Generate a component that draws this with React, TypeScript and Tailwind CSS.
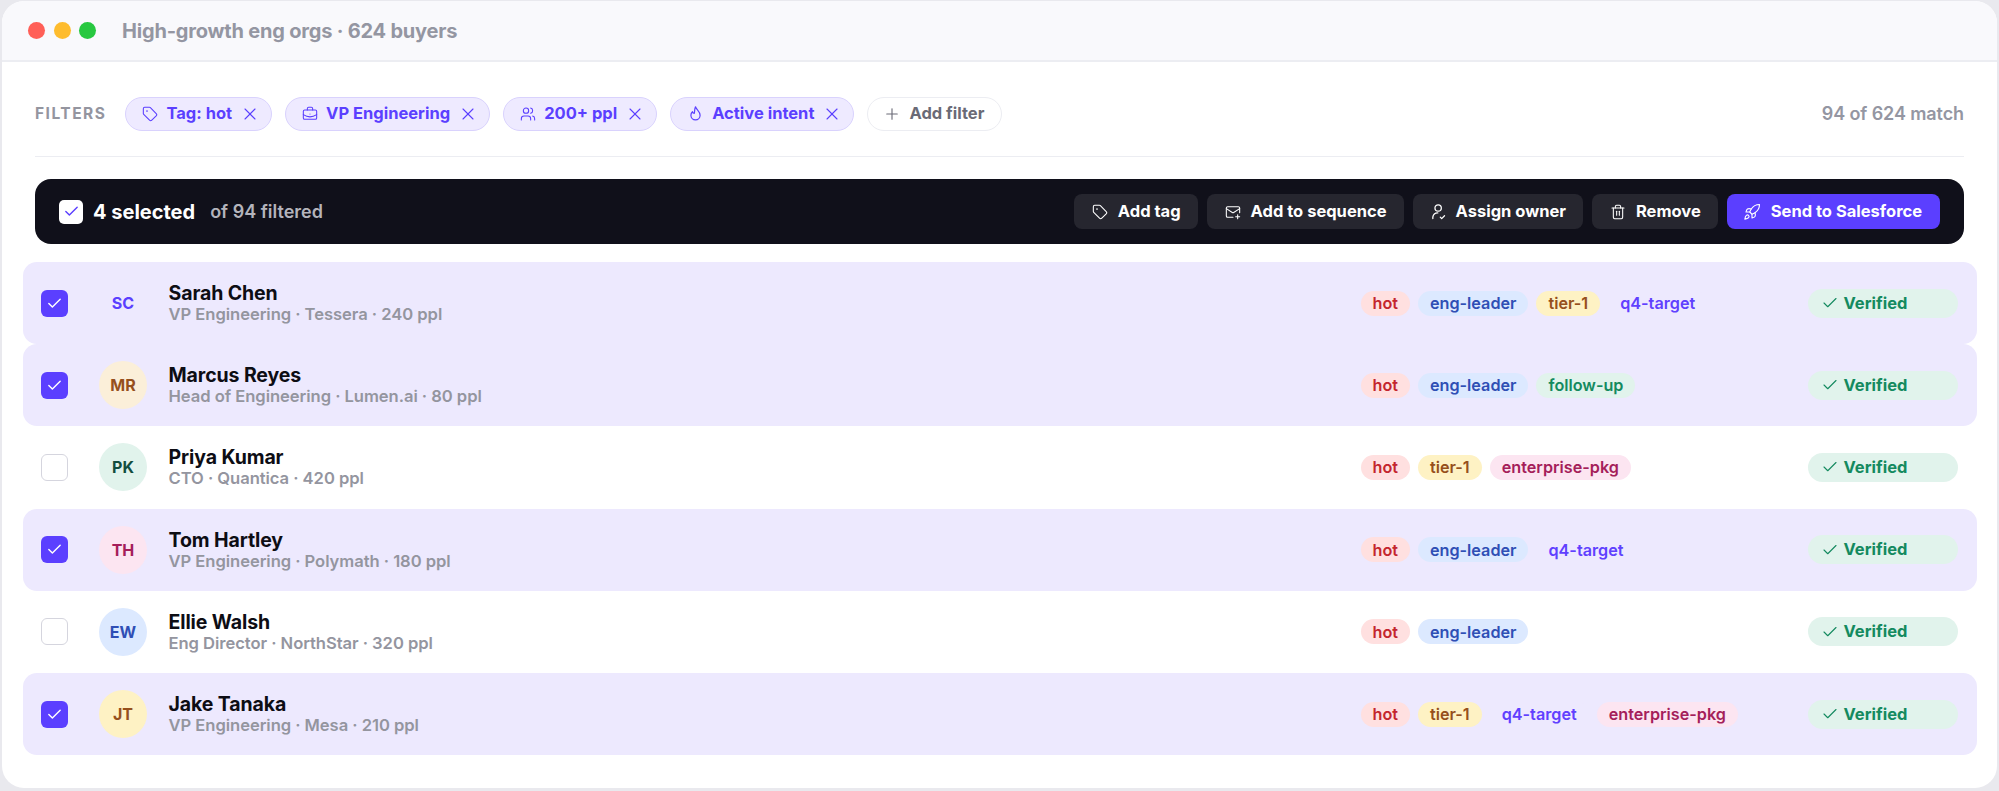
import {
  BriefcaseBusiness,
  Check,
  MailPlus,
  Plus,
  Rocket,
  Tag,
  Trash2,
  Users,
  X,
} from "lucide-react";
import type { ReactNode } from "react";

type TagName = "hot" | "eng-leader" | "tier-1" | "q4-target" | "follow-up" | "enterprise-pkg";

const tagStyles: Record<TagName, string> = {
  hot: "bg-[#ffe0e0] text-[#c4262e]",
  "eng-leader": "bg-[#dce9ff] text-[#2f4fb5]",
  "tier-1": "bg-[#fef2c4] text-[#96501c]",
  "q4-target": "bg-[#ede9fe] text-[#6040ff]",
  "follow-up": "bg-[#e1f3ec] text-[#148a5f]",
  "enterprise-pkg": "bg-[#fce5f1] text-[#a51e5a]",
};

const buyers: {
  initials: string;
  avatar: string;
  name: string;
  role: string;
  selected: boolean;
  tags: TagName[];
}[] = [
  {
    initials: "SC",
    avatar: "bg-[#ede9fe] text-[#5b3fff]",
    name: "Sarah Chen",
    role: "VP Engineering · Tessera · 240 ppl",
    selected: true,
    tags: ["hot", "eng-leader", "tier-1", "q4-target"],
  },
  {
    initials: "MR",
    avatar: "bg-[#fbefd9] text-[#96501c]",
    name: "Marcus Reyes",
    role: "Head of Engineering · Lumen.ai · 80 ppl",
    selected: true,
    tags: ["hot", "eng-leader", "follow-up"],
  },
  {
    initials: "PK",
    avatar: "bg-[#e1f3ec] text-[#134e3f]",
    name: "Priya Kumar",
    role: "CTO · Quantica · 420 ppl",
    selected: false,
    tags: ["hot", "tier-1", "enterprise-pkg"],
  },
  {
    initials: "TH",
    avatar: "bg-[#fce5f1] text-[#a51e5a]",
    name: "Tom Hartley",
    role: "VP Engineering · Polymath · 180 ppl",
    selected: true,
    tags: ["hot", "eng-leader", "q4-target"],
  },
  {
    initials: "EW",
    avatar: "bg-[#dce9ff] text-[#2f4fb5]",
    name: "Ellie Walsh",
    role: "Eng Director · NorthStar · 320 ppl",
    selected: false,
    tags: ["hot", "eng-leader"],
  },
  {
    initials: "JT",
    avatar: "bg-[#fef2c4] text-[#96501c]",
    name: "Jake Tanaka",
    role: "VP Engineering · Mesa · 210 ppl",
    selected: true,
    tags: ["hot", "tier-1", "q4-target", "enterprise-pkg"],
  },
];

function FilterPill({ icon, label }: { icon: ReactNode; label: string }) {
  return (
    <div className="flex h-[34px] items-center gap-[8px] rounded-full border-[1.5px] border-[#d9d2fd] bg-[#eeeaff] pl-[16px] pr-[11px] text-[16.5px] font-bold text-[#5b3fff]">
      {icon}
      <span>{label}</span>
      <X size={20} strokeWidth={1.3} />
    </div>
  );
}

function BarButton({ icon, label }: { icon: ReactNode; label: string }) {
  return (
    <div className="flex h-[35px] items-center gap-[10px] rounded-[8px] bg-[#26262f] pl-[18px] pr-[17px] text-[16.5px] font-bold text-white">
      {icon}
      <span>{label}</span>
    </div>
  );
}

function FlameIcon() {
  return (
    <svg width="17" height="17" viewBox="0 0 24 24" fill="none" stroke="currentColor" strokeWidth="1.7" strokeLinecap="round" strokeLinejoin="round">
      <path d="M12 2.5c1 3.8 6.5 6.5 6.5 12a6.5 6.5 0 0 1-13 0c0-2.2 1-3.9 2.2-5 .5 1.6 1.5 2.3 2.6 2.3C11 9 10.5 5.5 12 2.5z" />
    </svg>
  );
}

function AssignIcon() {
  return (
    <svg width="15" height="17" viewBox="0 0 21 24" fill="none" stroke="currentColor" strokeWidth="1.8" strokeLinecap="round" strokeLinejoin="round">
      <circle cx="10" cy="7" r="4.5" />
      <path d="M2.5 22v-2a7 7 0 0 1 7-6" />
      <path d="M13 20l2 2 4-4" />
    </svg>
  );
}

function BuyerRow({ buyer }: { buyer: (typeof buyers)[number] }) {
  return (
    <div
      className={`flex h-[82.2px] items-center rounded-[14px] pl-[18.5px] pr-[19px] ${
        buyer.selected ? "bg-[#ede9fe]" : "bg-white"
      }`}
    >
      {buyer.selected ? (
        <div className="flex h-[27px] w-[27px] items-center justify-center rounded-[6px] bg-[#5b3fff] text-white">
          <Check size={17} strokeWidth={2} />
        </div>
      ) : (
        <div className="h-[27px] w-[27px] rounded-[6px] border-[1.5px] border-[#d5d5de] bg-white" />
      )}
      <div
        className={`ml-[31px] flex h-[48px] w-[48px] items-center justify-center rounded-full text-[16px] font-bold ${buyer.avatar}`}
      >
        {buyer.initials}
      </div>
      <div className="ml-[21.5px] flex-1">
        <div className="text-[19.5px] leading-[22px] font-bold tracking-[-0.1px] text-[#0d0d14]">
          {buyer.name}
        </div>
        <div className="text-[16.6px] leading-[20px] font-semibold tracking-[-0.05px] text-[#94959f]">
          {buyer.role}
        </div>
      </div>
      <div className="flex w-[447px] gap-[8px]">
        {buyer.tags.map((tag) => (
          <span
            key={tag}
            className={`flex h-[25px] items-center rounded-full px-[12px] text-[16.2px] font-semibold ${tagStyles[tag]}`}
          >
            {tag}
          </span>
        ))}
      </div>
      <div className="flex h-[29px] w-[150px] items-center gap-[5px] rounded-full bg-[#e1f3ec] pl-[13px] text-[16.5px] font-bold text-[#148a5f]">
        <Check size={18} strokeWidth={1.5} />
        Verified
      </div>
    </div>
  );
}

export default function App() {
  return (
    <div
      className="h-[791px] w-full bg-[#e9e9ee] pb-[3px] pl-[2px] pr-[2px] pt-[1px]"
      style={{ fontFamily: "Inter, 'Liberation Sans', sans-serif" }}
    >
      <div className="h-full overflow-hidden rounded-[22px] bg-white">
        <div className="flex h-[61px] items-center border-b-2 border-[#ecedf2] bg-[#f9f9fc] pl-[26px]">
          <div className="flex gap-[8.5px]">
            <div className="h-[17px] w-[17px] rounded-full bg-[#ff5f57]" />
            <div className="h-[17px] w-[17px] rounded-full bg-[#febc2e]" />
            <div className="h-[17px] w-[17px] rounded-full bg-[#28c840]" />
          </div>
          <div className="ml-[26px] text-[20px] font-bold tracking-[-0.2px] text-[#9496a2]">
            High-growth eng orgs · 624 buyers
          </div>
        </div>

        <div className="px-[33px]">
          <div className="flex h-[95px] items-center border-b-[1.5px] border-[#ecedf2] pt-[9px]">
            <div className="mr-[19px] text-[15.5px] font-bold tracking-[1.5px] text-[#94959f]">
              FILTERS
            </div>
            <div className="flex gap-[13px]">
              <FilterPill icon={<Tag size={16} strokeWidth={1.6} />} label="Tag: hot" />
              <FilterPill icon={<BriefcaseBusiness size={16} strokeWidth={1.6} />} label="VP Engineering" />
              <FilterPill icon={<Users size={16} strokeWidth={1.6} />} label="200+ ppl" />
              <FilterPill icon={<FlameIcon />} label="Active intent" />
              <div className="flex h-[34px] items-center gap-[8px] rounded-full border-[1.5px] border-[#ecedf2] bg-white pl-[15px] pr-[17px] text-[16.5px] font-bold text-[#6a6a76]">
                <Plus size={18} strokeWidth={1.5} />
                Add filter
              </div>
            </div>
            <div className="ml-auto text-[18px] font-semibold tracking-[-0.1px] text-[#9496a2]">
              94 of 624 match
            </div>
          </div>

          <div className="mt-[22px] flex h-[65px] items-center rounded-[16px] bg-[#10101a] px-[24px]">
            <div className="flex h-[24px] w-[24px] items-center justify-center rounded-[5px] bg-white text-[#5b3fff]">
              <Check size={17} strokeWidth={2} />
            </div>
            <div className="ml-[10px] text-[20px] font-bold text-white">4 selected</div>
            <div className="ml-[15px] text-[18px] font-semibold text-[#b4b4bc]">
              of 94 filtered
            </div>
            <div className="ml-auto flex gap-[9px]">
              <BarButton icon={<Tag size={16} strokeWidth={1.6} />} label="Add tag" />
              <BarButton icon={<MailPlus size={16} strokeWidth={1.6} />} label="Add to sequence" />
              <BarButton icon={<AssignIcon />} label="Assign owner" />
              <BarButton icon={<Trash2 size={16} strokeWidth={1.6} />} label="Remove" />
              <div className="flex h-[35px] items-center gap-[10px] rounded-[8px] bg-[#5b3fff] pl-[16px] pr-[18px] text-[16.5px] font-bold text-white">
                <Rocket size={18} strokeWidth={1.5} />
                Send to Salesforce
              </div>
            </div>
          </div>
        </div>

        <div className="mx-[20.5px] mt-[18px]">
          {buyers.map((buyer) => (
            <BuyerRow key={buyer.name} buyer={buyer} />
          ))}
        </div>
      </div>
    </div>
  );
}
